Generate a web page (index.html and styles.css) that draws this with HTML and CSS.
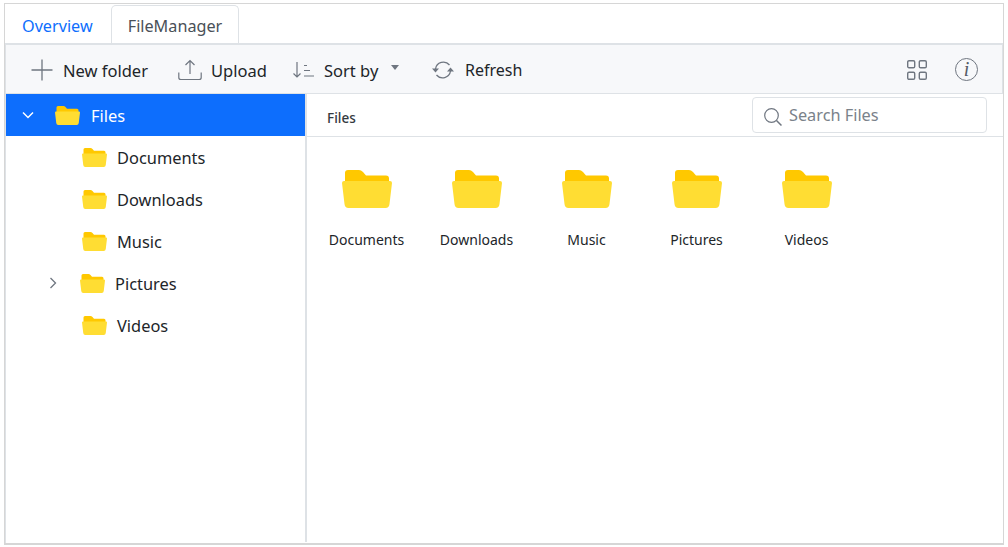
FILE: index.html
```html
<!DOCTYPE html>
<html lang="en">
<head>
<meta charset="utf-8">
<title>FileManager</title>
<link rel="stylesheet" href="styles.css">
</head>
<body>
<svg class="defs" width="0" height="0" aria-hidden="true">
  <symbol id="folder" viewBox="0 0 50 38">
    <path fill="#ffc800" d="M3 3a3 3 0 0 1 3-3H17q2 0 4 2l3 3.5H44q3 0 3 3V15H3z"/>
    <path fill="#ffdd33" d="M2 11H48q2 0 2 2L47.5 34q-.4 4-4 4H6.5q-3.600 0-4-4L0 13q0-2 2-2z"/>
  </symbol>
</svg>
<div class="frame">
  <div class="tabs">
    <div class="tab link">Overview</div>
    <div class="tab active">FileManager</div>
  </div>
  <div class="toolbar">
    <div class="tool plus">
      <svg width="24" height="24" viewBox="0 0 24 24"><path d="M12 1.500V22.500M1.500 12H22.500" fill="none" stroke="#6f7680" stroke-width="1.300"/></svg>
      <span>New folder</span>
    </div>
    <div class="tool upload">
      <svg width="24" height="24" viewBox="0 0 24 24"><path d="M12 16V2.500M7.500 7 12 2.500 16.500 7M.8 14.500V19.500Q.8 21.500 2.800 21.500H21.200Q23.200 21.500 23.200 19.500V14.500" fill="none" stroke="#6f7680" stroke-width="1.200"/></svg>
      <span>Upload</span>
    </div>
    <div class="tool sort">
      <svg width="22" height="18" viewBox="0 0 22 18"><path d="M4 1V16M.5 12.500 4 16 7.500 12.500M11 4.500H14M11 9.500H17M11 15H21" fill="none" stroke="#6f7680" stroke-width="1.200"/></svg>
      <span>Sort by</span>
      <svg class="caret" width="8" height="5" viewBox="0 0 8 5"><path d="M0 0H8L4 5z" fill="#6f7680"/></svg>
    </div>
    <div class="tool refresh">
      <svg width="22" height="20" viewBox="0 0 22 20"><path d="M3.500 9A8 8 0 0 1 17.500 5M18.500 11A8 8 0 0 1 4.500 15" fill="none" stroke="#6f7680" stroke-width="1.300"/><path d="M0 8.500H7L3.500 12.500zM15 11.500H22L18.500 7.500z" fill="#6f7680"/></svg>
      <span>Refresh</span>
    </div>
    <div class="tool-spacer"></div>
    <svg class="view" width="20" height="20" viewBox="0 0 20 20"><g fill="none" stroke="#6f7680" stroke-width="1.400"><rect x=".7" y=".7" width="7" height="7" rx="1.300"/><rect x="12.300" y=".7" width="7" height="7" rx="1.300"/><rect x=".7" y="12.300" width="7" height="7" rx="1.300"/><rect x="12.300" y="12.300" width="7" height="7" rx="1.300"/></g></svg>
    <div class="info"><span>i</span></div>
  </div>
  <div class="body">
    <div class="tree">
      <div class="row selected">
        <svg class="chev" width="12" height="8" viewBox="0 0 12 8"><path d="M1 1.500 6 6.500 11 1.500" fill="none" stroke="#fff" stroke-width="1.500"/></svg>
        <svg class="folder"><use href="#folder"/></svg>
        <span>Files</span>
      </div>
      <div class="row child"><svg class="folder"><use href="#folder"/></svg><span>Documents</span></div>
      <div class="row child"><svg class="folder"><use href="#folder"/></svg><span>Downloads</span></div>
      <div class="row child"><svg class="folder"><use href="#folder"/></svg><span>Music</span></div>
      <div class="row expandable">
        <svg class="chev-r" width="8" height="12" viewBox="0 0 8 12"><path d="M1.500 1 6.500 6 1.500 11" fill="none" stroke="#6f7680" stroke-width="1.300"/></svg>
        <svg class="folder"><use href="#folder"/></svg>
        <span>Pictures</span>
      </div>
      <div class="row child"><svg class="folder"><use href="#folder"/></svg><span>Videos</span></div>
    </div>
    <div class="main">
      <div class="head">
        <span class="crumb">Files</span>
        <div class="search">
          <svg width="20" height="20" viewBox="0 0 20 20"><circle cx="8.500" cy="8.500" r="6.800" fill="none" stroke="#6f7680" stroke-width="1.200"/><path d="M13.500 13.500 18.500 18.500" stroke="#6f7680" stroke-width="1.500"/></svg>
          <span>Search Files</span>
        </div>
      </div>
      <div class="grid">
        <div class="item"><svg class="big"><use href="#folder"/></svg><span>Documents</span></div>
        <div class="item"><svg class="big"><use href="#folder"/></svg><span>Downloads</span></div>
        <div class="item"><svg class="big"><use href="#folder"/></svg><span>Music</span></div>
        <div class="item"><svg class="big"><use href="#folder"/></svg><span>Pictures</span></div>
        <div class="item"><svg class="big"><use href="#folder"/></svg><span>Videos</span></div>
      </div>
    </div>
  </div>
</div>
</body>
</html>
```

FILE: styles.css
```css
* { box-sizing: border-box; }
html, body { margin: 0; height: 100%; background: #fff; overflow: hidden; }
body { padding: 3px 4px 2px 4px; font-family: "Noto Sans", "Open Sans", sans-serif; color: #212529; }
.defs { position: absolute; }
.frame {
  width: 1000px; height: 542px;
  border: 1px solid #d6d6d6; border-bottom-width: 2px;
  display: flex; flex-direction: column;
}
.tabs { height: 41px; display: flex; border-bottom: 2px solid #dee2e6; flex: none; }
.tab { height: 39px; padding: 9px 16px 0; font-size: 16.200px; line-height: 26px; }
.tab.link { width: 106px; padding-left: 17px; color: #0d6efd; }
.tab.active {
  width: 128px; text-align: center; padding: 7px 0 0;
  margin-top: 1px; height: 38px;
  color: #495057; background: #fff;
  border: 1px solid #dee2e6; border-bottom: none;
  border-radius: 5px 5px 0 0;
}
.toolbar {
  height: 49px; flex: none; display: flex; align-items: center;
  background: #f7f8fa; border-bottom: 1px solid #dee2e6;
  border-left: 1px solid #dee2e6; border-right: 1px solid #dee2e6;
  font-size: 16.500px; color: #212529; padding: 2px 0 0 24px;
}
.tool { display: flex; align-items: center; }
.plus { width: 148px; gap: 9px; }
.upload { width: 115px; gap: 9px; }
.sort { width: 139px; gap: 9px; }
.sort .caret { margin-left: 4px; margin-top: -5px; }
.refresh { gap: 11px; }
.refresh span { font-size: 16px; }
.tool-spacer { flex: 1; }
.view { flex: none; margin-right: 28px; margin-top: -1px; }
.info {
  flex: none; width: 23px; height: 23px; margin-right: 24px; margin-top: -1px;
  border: 1.300px solid #6f7680; border-radius: 50%;
  display: flex; align-items: center; justify-content: center;
  font-family: "Liberation Serif", serif; font-style: italic; font-size: 20px; color: #555c66;
}
.body { flex: 1; display: flex; min-height: 0; border-left: 1px solid #dee2e6; }
.tree { width: 301px; flex: none; border-right: 2px solid #dee2e6; margin-bottom: 1px; }
.row { height: 42px; display: flex; align-items: center; font-size: 16.400px; color: #212529; }
.row.child { padding-left: 76px; gap: 10px; }
.row.selected { background: #0d6efd; color: #fff; padding-left: 16px; }
.row.expandable { padding-left: 43px; }
.chev { flex: none; margin-right: 21px; }
.chev-r { flex: none; margin-right: 23px; }
.folder { width: 25px; height: 19px; flex: none; }
.row.selected .folder { margin-right: 11px; }
.row.expandable .folder { margin-right: 10px; }
.main { flex: 1; min-width: 0; }
.head {
  height: 43px; display: flex; align-items: center; justify-content: space-between;
  border-bottom: 1px solid #dee2e6; padding: 0 16px 0 20px;
}
.crumb { font-size: 13.500px; font-weight: 500; color: #343a40; margin-top: 6px; }
.search {
  width: 235px; height: 36px;
  border: 1px solid #dee2e6; border-radius: 4px;
  display: flex; align-items: center; gap: 6px; padding-left: 10px;
  font-size: 16.300px; color: #7a828a; background: #fff;
}
.search svg { margin-top: 3px; }
.grid { display: flex; padding: 33px 0 0 4.500px; }
.item { width: 110px; display: flex; flex-direction: column; align-items: center; font-size: 14px; color: #212529; }
.big { width: 50px; height: 38px; margin-bottom: 22px; }
```
